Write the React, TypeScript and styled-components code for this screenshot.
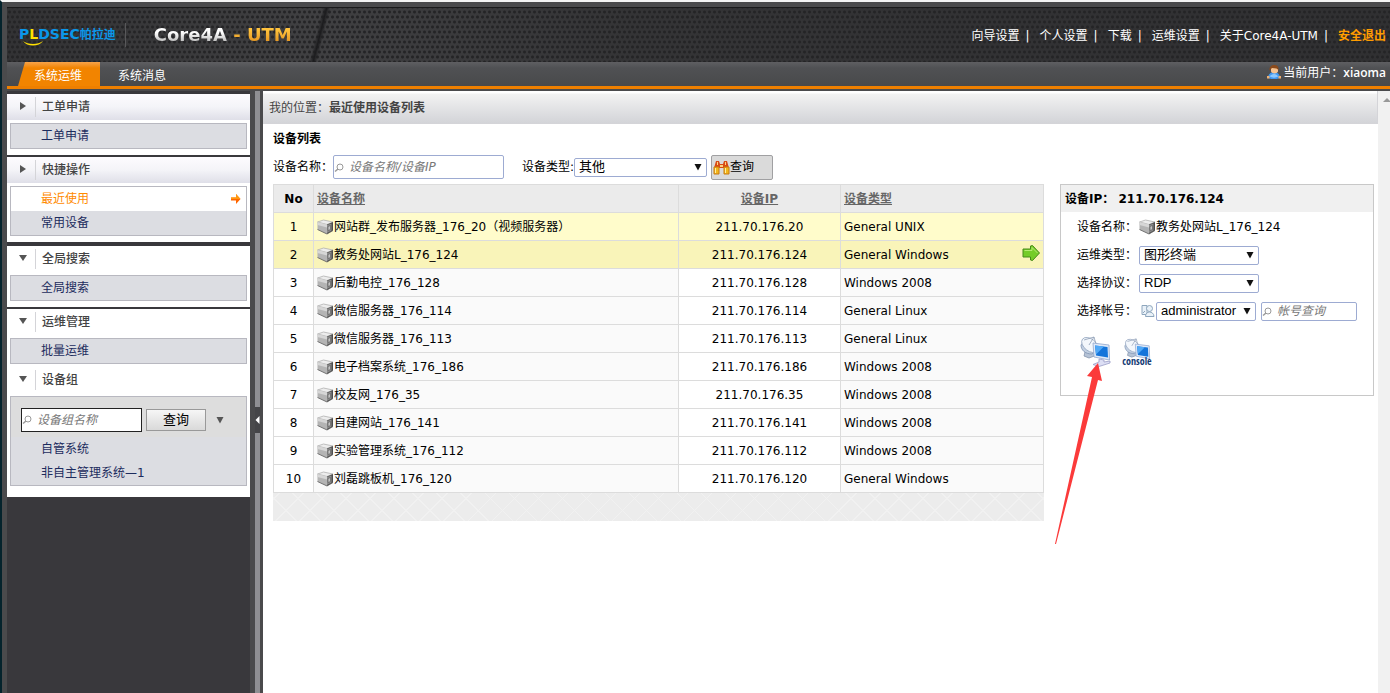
import React from "react";
import styled, { createGlobalStyle, css } from "styled-components";

const GlobalStyle = createGlobalStyle`
  *, *::before, *::after {
    box-sizing: border-box;
  }

  body {
    margin: 0;
    background: #fff;
    color: #000;
    font: 12px/16px "DejaVu Sans", "Noto Sans CJK SC", sans-serif;
  }

  a {
    color: inherit;
    text-decoration: none;
  }

  button, input, select {
    font: inherit;
    color: inherit;
    margin: 0;
  }
`;

const PageWrapper = styled.div`
  display: flex;
  flex-direction: column;
  min-height: 100vh;
  background: #4a4a4c;
  border-top: 2px solid #f4f4f4;
  border-left: 2px solid #04232c;
  padding: 5px 0 0 5px;
  overflow: hidden;
`;

const Header = styled.header`
  display: flex;
  justify-content: space-between;
  height: 55px;
  background-image: radial-gradient(circle, #242426 1px, transparent 2px),
    radial-gradient(circle, #242426 1px, transparent 2px),
    linear-gradient(90deg, #323234, #404042 22%, #343436 45%, #303032);
  background-size: 5px 10px, 5px 10px, 100% 100%;
  background-position: 0 0, 3px 5px, 0 0;
  box-shadow: inset 0 1px 0 #1a1a1b;
`;

const Brand = styled.div`
  position: relative;
  display: flex;
  align-items: center;
  padding-left: 12px;

  &::after {
    content: "";
    position: absolute;
    top: 0;
    right: -32px;
    width: 8px;
    height: 100%;
    background: linear-gradient(90deg, transparent, #1c1c1e, transparent);
    transform: skewX(-14deg);
  }
`;

const Logo = styled.div`
  position: relative;
  display: flex;
  align-items: baseline;
  color: #0a97ea;
  font-size: 14px;
  font-weight: bold;

  small {
    font-size: 12px;
  }

  em {
    color: #ffe000;
    font-style: normal;
  }

  svg {
    position: absolute;
    left: 4px;
    bottom: -3px;
  }
`;

const ProductName = styled.h1`
  margin: 0 0 0 9px;
  padding-left: 28px;
  border-left: 1px solid #58585a;
  font-size: 18px;
  line-height: 24px;

  span {
    color: transparent;
    background: linear-gradient(#fff 40%, #a5a5a5);
    background-clip: text;
  }

  span + span {
    background: linear-gradient(#ffc23c 30%, #dd8a1c);
    background-clip: text;
  }
`;

const HeaderLinks = styled.nav`
  display: flex;
  align-items: center;
  padding: 2px 4px 0 0;
  color: #fff;

  a:not(:last-child)::after {
    content: "|";
    margin: 0 10px 0 6px;
  }
`;

const ExitLink = styled.a`
  color: #ff9c00;
  font-weight: bold;
`;

const NavBar = styled.nav`
  display: flex;
  height: 27px;
  border-bottom: 3px solid #ee7f00;
  background: linear-gradient(#5f5f62, #505154 25%, #48494b);
  color: #fff;
  font-family: "Open Sans", "Noto Sans CJK SC", sans-serif;
`;

const NavTab = styled.a<{ $active?: boolean }>`
  padding: 6px 18px 2px 18px;

  ${({ $active }) =>
    $active &&
    css`
      margin-left: 11px;
      padding-left: 16px;
      background: linear-gradient(#f7a34a, #f28400 25%);
      clip-path: polygon(7px 0, 100% 0, 100% 100%, 0 100%);
    `}
`;

const CurrentUser = styled.div`
  display: flex;
  align-items: flex-start;
  gap: 2px;
  margin-left: auto;
  padding: 3px 4px 0 0;

  b {
    font-weight: 600;
  }
`;

const Body = styled.div`
  display: flex;
  flex: 1;
  padding-top: 2px;
`;

const Sidebar = styled.aside`
  width: 243px;
  padding-top: 3px;
  background: #39383c;
`;

const Section = styled.section<{ $gap?: number; $end?: number }>`
  padding-bottom: ${({ $end = 6 }) => $end}px;
  margin-bottom: ${({ $gap = 0 }) => $gap}px;
  background: #fff;
`;

const SectionHead = styled.h2<{ $shaded?: boolean }>`
  display: flex;
  align-items: center;
  height: 26px;
  margin: 0 0 3px;
  background: ${({ $shaded }) => ($shaded ? "linear-gradient(#fdfbfe, #f4f4f8 50%, #dfdfe8)" : "#fff")};
  color: #444;
  font-size: 12px;
  font-weight: 500;

  svg {
    margin: 0 8px 2px 12px;
  }

  span {
    height: 20px;
    padding: 2px 0 0 6px;
    border-left: 1px solid #d4d4d8;
  }
`;

const SectionBox = styled.div`
  margin: 0 3px;
  border: 1px solid #b8b8c0;
  background: #dcdde2;
`;

const SideLink = styled.a<{ $active?: boolean }>`
  display: flex;
  align-items: center;
  justify-content: space-between;
  height: 24px;
  padding: 0 5px 0 30px;
  background: ${({ $active }) => ($active ? "#fff" : "transparent")};
  color: ${({ $active }) => ($active ? "#ff8a00" : "#1d2c5e")};
`;

const GroupSearch = styled.form`
  display: flex;
  align-items: center;
  height: 40px;
  padding: 5px 0 0 10px;
  background: #dddddd;

  > svg {
    margin-left: 10px;
  }
`;

const GroupButton = styled.button`
  width: 60px;
  height: 22px;
  margin-left: 4px;
  padding: 0;
  border: 1px solid #999;
  background: linear-gradient(#f6f6f6, #d9d9d9);
  font-size: 13px;
`;

const SearchBox = styled.label<{ $width: number; $height: number; $dark?: boolean }>`
  display: flex;
  align-items: center;
  width: ${({ $width }) => $width}px;
  height: ${({ $height }) => $height}px;
  border: 1px solid ${({ $dark }) => ($dark ? "#222" : "#9dabd2")};
  border-radius: ${({ $dark }) => ($dark ? 0 : 2)}px;
  background: #fff;

  svg {
    flex: none;
  }

  input {
    width: 100%;
    min-width: 0;
    padding: 0 0 0 4px;
    border: 0;
    outline: 0;
    background: none;
  }

  input::placeholder {
    color: #777;
    font-style: italic;
    opacity: 1;
  }
`;

const Splitter = styled.div`
  display: flex;
  align-items: center;
  width: 5px;
  margin: 0 3px 0 5px;
  background: #8f8f93;

  button {
    display: flex;
    align-items: center;
    width: 5px;
    height: 26px;
    margin-top: 56px;
    padding: 0;
    border: 0;
    background: #454548;
  }
`;

const Main = styled.main`
  flex: 1;
  min-width: 0;
  background: #fff;
`;

const Breadcrumb = styled.div`
  height: 33px;
  padding: 9px 6px 0;
  border: solid #d4d4d8;
  border-width: 0 1px 1px 0;
  background: linear-gradient(#fff 2px, #f2f2f2 3px, #d3d4d8);
  color: #444;
`;

const Content = styled.div`
  padding: 7px 4px 0 10px;
`;

const Title = styled.h2`
  margin: 0;
  font-size: 12px;
  font-weight: bold;
`;

const FilterRow = styled.form`
  display: flex;
  align-items: center;
  height: 26px;
  margin: 7px 0 4px;
`;

const TypeLabel = styled.label`
  margin-left: 18px;
`;

const SelectWrapper = styled.span<{ $width: number }>`
  position: relative;
  display: inline-flex;
  width: ${({ $width }) => $width}px;
  height: 19px;
  font-family: "Liberation Sans", "Noto Sans CJK SC", sans-serif;
  font-size: 13px;

  select {
    width: 100%;
    padding: 0 16px 0 4px;
    border: 1px solid #9dabd2;
    border-radius: 2px;
    background: #fff;
    appearance: none;
  }

  svg {
    position: absolute;
    top: 5px;
    right: 5px;
    pointer-events: none;
  }
`;

const QueryButton = styled.button`
  display: flex;
  align-items: center;
  width: 62px;
  height: 25px;
  margin-left: 4px;
  padding: 0 1px;
  border: 1px solid #a0a0a2;
  border-radius: 2px;
  background: #dadada;
`;

const Columns = styled.div`
  display: flex;
  align-items: flex-start;
  gap: 16px;
`;

const DeviceList = styled.div`
  flex: 1;
  min-width: 0;
`;

const Table = styled.table`
  width: 100%;
  border-collapse: collapse;
  table-layout: fixed;

  th, td {
    height: 28px;
    padding: 0 3px;
    border: 1px solid #dcdcdc;
    text-align: left;
    white-space: nowrap;
  }

  th {
    background: #ebebeb;
  }

  th a {
    color: #666;
    text-decoration: underline;
  }

  td {
    background: #fafafa;
  }

  td:first-child, td:nth-child(3) {
    background: #fff;
  }

  th:first-child, td:first-child, th:nth-child(3), td:nth-child(3) {
    text-align: center;
  }
`;

const DeviceRow = styled.tr<{ $tint?: string }>`
  ${({ $tint }) =>
    $tint &&
    css`
      && > td {
        background: ${$tint};
      }
    `}
`;

const CellLine = styled.span`
  display: flex;
  align-items: center;

  > svg:last-child {
    margin-left: auto;
  }
`;

const TableFoot = styled.div`
  height: 28px;
  background: repeating-linear-gradient(45deg, transparent 0 16px, #f1f1f1 16px 17px),
    repeating-linear-gradient(-45deg, transparent 0 16px, #f1f1f1 16px 17px), #ececec;
`;

const DetailPanel = styled.section`
  width: 314px;
  height: 212px;
  border: 1px solid #c8c8c8;
`;

const DetailTitle = styled.h3`
  height: 27px;
  margin: 0 0 1px;
  padding: 6px 4px;
  background: #f0f0f0;
  font-size: 12px;
`;

const DetailRow = styled.div`
  display: flex;
  align-items: center;
  height: 28px;
  padding-left: 16px;

  > :first-child {
    width: 62px;
  }
`;

const AccountPicker = styled.div`
  display: flex;
  align-items: center;
  padding-left: 2px;
  gap: 1px;

  label {
    margin-left: 4px;
  }
`;

const Actions = styled.div`
  display: flex;
  gap: 9px;
  padding: 11px 0 0 19px;
`;

const ActionButton = styled.button`
  position: relative;
  width: 32px;
  height: 32px;
  padding: 0;
  border: 0;
  background: none;
`;

const Pointer = styled.svg`
  position: absolute;
  top: 27px;
  left: -25px;
  pointer-events: none;
`;

const ScrollTrack = styled.div`
  width: 12px;
  padding: 0 0 0 5px;
  overflow: hidden;
  background: #f1f1f1;
`;

const Magnifier = () => (
  <svg width="11" height="11" viewBox="0 0 11 11" fill="none" stroke="#999">
    <circle cx="6" cy="5" r="3" />
    <path d="M4 7L1 9.500" strokeWidth="1.5" />
  </svg>
);

const Caret = ({ color = "#111" }: { color?: string }) => (
  <svg width="8" height="8" viewBox="0 0 8 8">
    <path d="M0.5 1h7L4 7.500z" fill={color} />
  </svg>
);

const FoldIcon = ({ open }: { open?: boolean }) => (
  <svg width="8" height="8" viewBox="0 0 8 8">
    <path d={open ? "M0 1h8L4 7z" : "M1 0v8L7 4z"} fill="#555" />
  </svg>
);

const ScrollUpIcon = () => (
  <svg width="8" height="5" viewBox="0 0 8 5">
    <path d="M4 0l4 4H0z" fill="#999" />
  </svg>
);

const ServerIcon = () => (
  <svg width="17" height="16" viewBox="0 0 17 16">
    <path d="M0.500 3L6.500 1l9.500 2-6 2.500z" fill="#ededed" stroke="#a8a8a8" strokeWidth=".7" />
    <path d="M0.500 3L10 5.500V15L0.500 10.500z" fill="#b4b4b4" />
    <path d="M0.500 3L10 5.500v3L0.500 6z" fill="#d6d6d6" />
    <path d="M10 5.500L16 3v8.500L10 15z" fill="#4c4c4c" />
    <path d="M10 6l4.500-1.500v7L10 14z" fill="#8b8b8b" />
    <path d="M11 7.500l2.500-1v4L11 11.500z" fill="#c4c4c4" stroke="#555" strokeWidth=".6" />
    <path d="M0.500 10.500L10 15l6-3.500" fill="none" stroke="#5a5a5a" strokeWidth=".8" />
  </svg>
);

const UserIcon = () => (
  <svg width="14" height="14" viewBox="0 0 14 14">
    <path d="M1 13C1 9 4 7 7 7s6 2 6 6c-2 1.500-10 1.500-12 0z" fill="#3f97f0" />
    <path d="M3 11.500c1-3.500 7-3.500 8 0-2 1.500-6 1.500-8 0z" fill="#8cc8ff" />
    <path d="M4 3h7v3.500C10 9 5 9 4 6.500z" fill="#f6c391" />
    <path d="M2.500 5.500C2 1.500 4.500 0 7.500 0S12 2 11.500 5L9.500 3.500 5 3z" fill="#8a4a1c" />
    <path d="M0 11h2.500v2.500H0zM11.500 11H14v2.500h-2.500z" fill="#f0b070" />
  </svg>
);

const BinocularsIcon = () => (
  <svg width="17" height="15" viewBox="0 0 17 15">
    <path d="M3 1h3l1 3h3l1-3h3l2 7H1z" fill="#d84a16" />
    <path d="M4 2h1v3H4zM12 2h1v3h-1zM7 5h3v2H7z" fill="#ffd27a" />
    <path d="M1 7h5v7H1zM11 7h5v7h-5z" fill="#f3b71b" stroke="#c87a10" />
    <path d="M2.500 8v5M12.500 8v5" stroke="#fff0a0" />
  </svg>
);

const GoIcon = () => (
  <svg width="18" height="20" viewBox="0 0 18 20">
    <path d="M1 4h7.500V1l2-.5L17.500 8l-7 7.500-2-.5v-3H1z" fill="#74cc28" stroke="#478a1a" strokeLinejoin="round" />
    <path d="M2.500 5.500h7.500V2.500l5.500 5.500" fill="none" stroke="#b4ec72" />
  </svg>
);

const AccountsIcon = () => (
  <svg width="14" height="14" viewBox="0 0 14 14" fill="#e9f1f8" stroke="#8ea6bd">
    <path d="M1 1.500h5v9H1zM2 9l2-2" />
    <circle cx="8.500" cy="4.500" r="3" />
    <path d="M4.500 12.500c0-3 2-4.500 4-4.500s4.500 1.500 4.500 4.500z" />
  </svg>
);

const TerminalArt = () => (
  <>
    <path d="M5 16l8-2 4 5-8 3-5-2z" fill="#b6c3d6" stroke="#8494ac" strokeWidth=".8" />
    <path d="M1 9c0 5 4 9 11 9l5-4L5 4z" fill="#c3d0e2" stroke="#7e93b2" strokeWidth=".8" />
    <ellipse cx="10" cy="9" rx="9.500" ry="6" transform="rotate(38 10 9)" fill="#f3f7fc" stroke="#94a6c0" strokeWidth=".8" />
    <path d="M4 4l10-3 3 11M14 1L9 9" fill="none" stroke="#8d9db5" strokeWidth=".8" />
    <path d="M13 7l16 2 .5 15L14 21z" fill="#dfe9f8" stroke="#90a6cc" strokeWidth=".8" />
    <path d="M15 9.500l12.500 1.500.5 10.500L16 19.500z" fill="#1474da" />
    <path d="M15 9.500l9 1-8 8z" fill="#50a8f6" />
  </>
);

const TerminalIcon = () => (
  <svg width="32" height="32" viewBox="0 0 32 32">
    <TerminalArt />
    <path d="M19 23l5 1v2l6-1v2l-11 3.500-6-2 6-2.500z" fill="#dcdef4" stroke="#9a9dc6" strokeWidth=".8" />
  </svg>
);

const ConsoleIcon = () => (
  <svg width="32" height="32" viewBox="0 0 32 32" overflow="visible">
    <g transform="translate(3 2) scale(.87)">
      <TerminalArt />
    </g>
    <text x="16" y="29" textAnchor="middle" fill="#123a72" fontFamily="Open Sans Condensed, Liberation Sans Narrow, Liberation Sans, sans-serif" fontSize="10" fontWeight="bold">
      console
    </text>
  </svg>
);

const headerLinks = ["向导设置", "个人设置", "下载", "运维设置", "关于Core4A-UTM"];

const devices = [
  { name: "网站群_发布服务器_176_20（视频服务器）", ip: "211.70.176.20", type: "General UNIX", tint: "#fffccb" },
  { name: "教务处网站L_176_124", ip: "211.70.176.124", type: "General Windows", tint: "#f9f4b9", selected: true },
  { name: "后勤电控_176_128", ip: "211.70.176.128", type: "Windows 2008" },
  { name: "微信服务器_176_114", ip: "211.70.176.114", type: "General Linux" },
  { name: "微信服务器_176_113", ip: "211.70.176.113", type: "General Linux" },
  { name: "电子档案系统_176_186", ip: "211.70.176.186", type: "Windows 2008" },
  { name: "校友网_176_35", ip: "211.70.176.35", type: "Windows 2008" },
  { name: "自建网站_176_141", ip: "211.70.176.141", type: "Windows 2008" },
  { name: "实验管理系统_176_112", ip: "211.70.176.112", type: "Windows 2008" },
  { name: "刘磊跳板机_176_120", ip: "211.70.176.120", type: "General Windows" },
];

interface SelectProps {
  id: string;
  width: number;
  value: string;
}

const Select = ({ id, width, value }: SelectProps) => (
  <SelectWrapper $width={width}>
    <select id={id} defaultValue={value}>
      <option>{value}</option>
    </select>
    <Caret />
  </SelectWrapper>
);

interface SideSectionProps {
  title: string;
  open?: boolean;
  gap?: number;
  end?: number;
  children: React.ReactNode;
}

const SideSection = ({ title, open, gap, end, children }: SideSectionProps) => (
  <Section $gap={gap} $end={end}>
    <SectionHead $shaded={!open}>
      <FoldIcon open={open} />
      <span>{title}</span>
    </SectionHead>
    <SectionBox>{children}</SectionBox>
  </Section>
);

const SideMenu = () => (
  <Sidebar>
    <SideSection title="工单申请" gap={2}>
      <SideLink href="#">工单申请</SideLink>
    </SideSection>
    <SideSection title="快捷操作" gap={4}>
      <SideLink href="#" $active>
        最近使用
        <svg width="10" height="10" viewBox="0 0 10 10">
          <path d="M0 3.500h5V0l4.500 5L5 10V6.500H0z" fill="#f60" />
          <path d="M0 3.500h5V0l4.500 5H0z" fill="#ff9a10" />
        </svg>
      </SideLink>
      <SideLink href="#">常用设备</SideLink>
    </SideSection>
    <SideSection title="全局搜索" open gap={2}>
      <SideLink href="#">全局搜索</SideLink>
    </SideSection>
    <SideSection title="运维管理" open end={3}>
      <SideLink href="#">批量运维</SideLink>
    </SideSection>
    <SideSection title="设备组" open end={11}>
      <GroupSearch>
        <SearchBox $width={121} $height={24} $dark>
          <Magnifier />
          <input aria-label="设备组名称" placeholder="设备组名称" />
        </SearchBox>
        <GroupButton type="button">查询</GroupButton>
        <Caret color="#555" />
      </GroupSearch>
      <SideLink href="#">自管系统</SideLink>
      <SideLink href="#">非自主管理系统—1</SideLink>
    </SideSection>
  </Sidebar>
);

const DeviceTable = () => (
  <DeviceList>
    <Table>
      <colgroup>
        <col width="40" />
        <col />
        <col width="162" />
        <col width="203" />
      </colgroup>
      <thead>
        <tr>
          <th>No</th>
          <th><a href="#">设备名称</a></th>
          <th><a href="#">设备IP</a></th>
          <th><a href="#">设备类型</a></th>
        </tr>
      </thead>
      <tbody>
        {devices.map((device, index) => (
          <DeviceRow key={device.ip} $tint={device.tint}>
            <td>{index + 1}</td>
            <td>
              <CellLine>
                <ServerIcon />
                <span>{device.name}</span>
              </CellLine>
            </td>
            <td>{device.ip}</td>
            <td>
              <CellLine>
                <span>{device.type}</span>
                {device.selected && <GoIcon />}
              </CellLine>
            </td>
          </DeviceRow>
        ))}
      </tbody>
    </Table>
    <TableFoot />
  </DeviceList>
);

const DeviceDetail = () => (
  <DetailPanel>
    <DetailTitle>设备IP： 211.70.176.124</DetailTitle>
    <DetailRow>
      <span>设备名称：</span>
      <ServerIcon />
      教务处网站L_176_124
    </DetailRow>
    <DetailRow>
      <label htmlFor="terminal">运维类型：</label>
      <Select id="terminal" width={120} value="图形终端" />
    </DetailRow>
    <DetailRow>
      <label htmlFor="protocol">选择协议：</label>
      <Select id="protocol" width={120} value="RDP" />
    </DetailRow>
    <DetailRow>
      <label htmlFor="account">选择帐号：</label>
      <AccountPicker>
        <AccountsIcon />
        <Select id="account" width={100} value="administrator" />
        <SearchBox $width={96} $height={19}>
          <Magnifier />
          <input aria-label="帐号查询" placeholder="帐号查询" />
        </SearchBox>
      </AccountPicker>
    </DetailRow>
    <Actions>
      <ActionButton aria-label="图形终端">
        <TerminalIcon />
        <Pointer width="48" height="182" viewBox="0 0 48 182">
          <path d="M43 0L32 13l5 1L0 181h1L43 17l4 1z" fill="#fb3a3a" />
        </Pointer>
      </ActionButton>
      <ActionButton aria-label="console">
        <ConsoleIcon />
      </ActionButton>
    </Actions>
  </DetailPanel>
);

const App = () => {
  return (
    <>
      <GlobalStyle />
      <PageWrapper>
        <Header>
          <Brand>
            <Logo>
              <span>P<em>L</em>DSEC</span>
              <small>帕拉迪</small>
              <svg width="20" height="5" viewBox="0 0 20 5">
                <path d="M0 0c5 4 15 4 20 0-4 6-16 6-20 0z" fill="#ffe000" />
              </svg>
            </Logo>
            <ProductName>
              <span>Core4A</span> <span>- UTM</span>
            </ProductName>
          </Brand>
          <HeaderLinks>
            {headerLinks.map((link) => (
              <a href="#" key={link}>{link}</a>
            ))}
            <ExitLink href="#">安全退出</ExitLink>
          </HeaderLinks>
        </Header>
        <NavBar>
          <NavTab href="#" $active>系统运维</NavTab>
          <NavTab href="#">系统消息</NavTab>
          <CurrentUser>
            <UserIcon />
            <span>当前用户：<b>xiaoma</b></span>
          </CurrentUser>
        </NavBar>
        <Body>
          <SideMenu />
          <Splitter>
            <button aria-label="收起">
              <svg width="5" height="8" viewBox="0 0 5 8">
                <path d="M4.500 0v8L0.500 4z" fill="#fff" />
              </svg>
            </button>
          </Splitter>
          <Main>
            <Breadcrumb>
              我的位置：<b>最近使用设备列表</b>
            </Breadcrumb>
            <Content>
              <Title>设备列表</Title>
              <FilterRow>
                <label htmlFor="device-name">设备名称：</label>
                <SearchBox $width={171} $height={24}>
                  <Magnifier />
                  <input id="device-name" placeholder="设备名称/设备IP" />
                </SearchBox>
                <TypeLabel htmlFor="device-type">设备类型:</TypeLabel>
                <Select id="device-type" width={133} value="其他" />
                <QueryButton type="button">
                  <BinocularsIcon />
                  查询
                </QueryButton>
              </FilterRow>
              <Columns>
                <DeviceTable />
                <DeviceDetail />
              </Columns>
            </Content>
          </Main>
          <ScrollTrack>
            <ScrollUpIcon />
          </ScrollTrack>
        </Body>
      </PageWrapper>
    </>
  );
};

export default App;
